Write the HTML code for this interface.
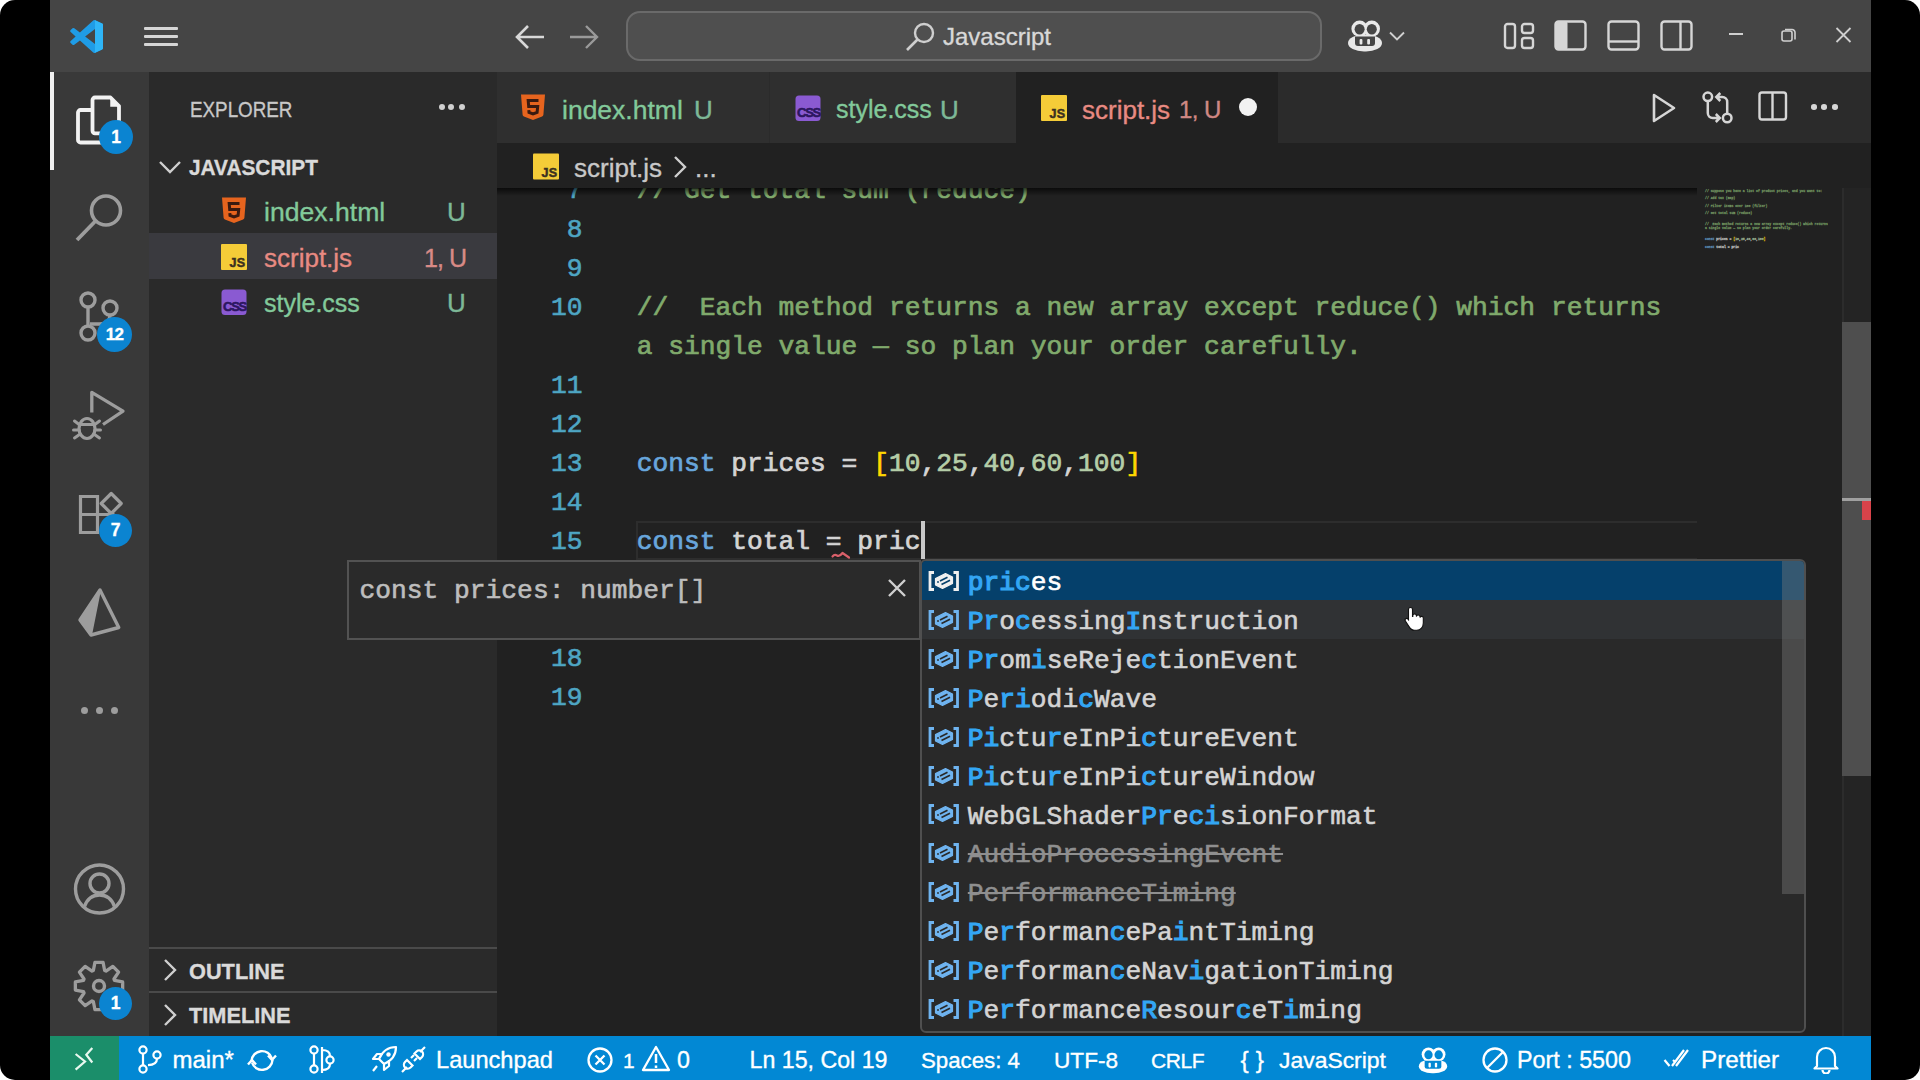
<!DOCTYPE html>
<html><head><meta charset="utf-8">
<style>
*{margin:0;padding:0;box-sizing:border-box}
html,body{width:1920px;height:1080px;overflow:hidden;background:#fff}
body{position:relative;font-family:"Liberation Sans",sans-serif;line-height:normal;-webkit-text-stroke:0.35px currentColor}
.a{position:absolute;white-space:nowrap}
.frame{left:0;top:0;width:1920px;height:1080px;background:#000;border-radius:15px}
.title{left:50px;top:0;width:1821px;height:72px;background:#454545}
.act{left:50px;top:72px;width:99px;height:964px;background:#393939}
.side{left:149px;top:72px;width:348px;height:964px;background:#2a2a2a}
.tabs{left:497px;top:72px;width:1374px;height:71px;background:#2b2b2b}
.editor{left:497px;top:143px;width:1374px;height:893px;background:#212121}
.bc{left:497px;top:143px;width:1374px;height:45px;background:#222222}
.status{left:50px;top:1036px;width:1821px;height:44px;background:#0288d4}
.remote{left:50px;top:1036px;width:69px;height:44px;background:#1b8e6a}
.mono{font-family:"Liberation Mono",monospace}
.ln{width:85.5px;text-align:right;font-size:26.28px;color:#4ea6c4;-webkit-text-stroke:0.6px #4ea6c4}
.code{font-size:26.28px;white-space:pre;-webkit-text-stroke:0.7px currentColor}
.code span{-webkit-text-stroke:0.7px currentColor}
</style></head><body>
<div class="a frame"></div>
<div class="a title"></div>
<div class="a act"></div>
<div class="a side"></div>
<div class="a tabs"></div>
<div class="a editor"></div>
<div class="a status"></div>
<div class="a remote"></div>
<!-- TITLE BAR -->
<svg class="a" style="left:69.8px;top:20px" width="33.5" height="33" viewBox="0 0 100 100"><path fill="#1f9ce6" d="M96.46 10.8L75.86.87a6.23 6.230 0 0 0-7.1 1.21L29.35 38.04 12.19 25.01a4.16 4.16 0 0 0-5.32.24l-5.5 5a4.17 4.17 0 0 0 0 6.16L16.26 50 1.37 63.58a4.17 4.17 0 0 0 0 6.160l5.5 5a4.16 4.16 0 0 0 5.32.24l17.16-13.03 39.41 35.96a6.22 6.22 0 0 0 7.1 1.2l20.6-9.92a6.25 6.25 0 0 0 3.54-5.63V16.43a6.25 6.25 0 0 0-3.54-5.63zM75 72.7L45.1 50 75 27.3z"/><path fill="#2fb5f7" d="M75 0.5 L96.46 10.8 a6.25 6.25 0 0 1 3.54 5.63 V83.57 a6.25 6.25 0 0 1-3.54 5.63 L75 99.5z"/></svg>
<div class="a" style="left:144px;top:27px;width:34px;height:3px;background:#d6d6d6;border-radius:1px"></div>
<div class="a" style="left:144px;top:35px;width:34px;height:3px;background:#d6d6d6;border-radius:1px"></div>
<div class="a" style="left:144px;top:43px;width:34px;height:3px;background:#d6d6d6;border-radius:1px"></div>
<svg class="a" style="left:514px;top:24px" width="32" height="26" viewBox="0 0 32 26"><path d="M30 13H4M14 2L3 13l11 11" fill="none" stroke="#d8d8d8" stroke-width="2.6"/></svg>
<svg class="a" style="left:568px;top:24px" width="32" height="26" viewBox="0 0 32 26"><path d="M2 13h26M18 2l11 11-11 11" fill="none" stroke="#9a9a9a" stroke-width="2.4"/></svg>
<div class="a" style="left:626px;top:11px;width:696px;height:50px;background:#4f4f4f;border:2px solid #6a6a6a;border-radius:14px"></div>
<svg class="a" style="left:905px;top:21px" width="32" height="32" viewBox="0 0 32 32"><circle cx="19" cy="12" r="9" fill="none" stroke="#cfcfcf" stroke-width="2.4"/><path d="M12.5 18.5L2 29" stroke="#cfcfcf" stroke-width="2.6"/></svg>
<div class="a" style="left:943px;top:21px;font-size:24px;color:#d8d8d8;line-height:32px">Javascript</div>
<svg class="a" style="left:1347px;top:19.5px" width="36" height="32" viewBox="0 0 36 32"><rect x="1" y="14.5" width="34" height="17" rx="16" ry="8.5" fill="#e8e8e8"/><circle cx="12.6" cy="8.8" r="8.2" fill="#e8e8e8"/><circle cx="24.8" cy="8.8" r="8.2" fill="#e8e8e8"/><ellipse cx="12.6" cy="9.3" rx="5" ry="5.3" fill="#454545"/><ellipse cx="24.8" cy="9.3" rx="5" ry="5.3" fill="#454545"/><path d="M8 16.5h20v6.5a3 3 0 0 1-3 3H11a3 3 0 0 1-3-3z" fill="#454545"/><rect x="12.6" y="19" width="2.8" height="5.5" rx="1" fill="#e8e8e8"/><rect x="20.2" y="19" width="2.8" height="5.5" rx="1" fill="#e8e8e8"/></svg>
<svg class="a" style="left:1388px;top:30px" width="18" height="12" viewBox="0 0 18 12"><path d="M2 2.5l7 7 7-7" fill="none" stroke="#d0d0d0" stroke-width="1.9"/></svg>
<svg class="a" style="left:1503px;top:22px" width="32" height="28" viewBox="0 0 32 28"><rect x="2" y="2" width="10" height="24" rx="2.5" fill="none" stroke="#d6d6d6" stroke-width="2.4"/><rect x="19" y="2" width="11" height="9" rx="2.5" fill="none" stroke="#d6d6d6" stroke-width="2.4"/><rect x="19" y="16" width="11" height="10" rx="2.5" fill="none" stroke="#d6d6d6" stroke-width="2.4"/></svg>
<svg class="a" style="left:1554px;top:20px" width="34" height="32" viewBox="0 0 34 32"><rect x="1.5" y="1.5" width="30" height="28" rx="3" fill="none" stroke="#d6d6d6" stroke-width="2.4"/><rect x="1.5" y="1.5" width="12" height="28" rx="2" fill="#d6d6d6"/></svg>
<svg class="a" style="left:1607px;top:20px" width="34" height="32" viewBox="0 0 34 32"><rect x="1.5" y="1.5" width="30" height="28" rx="3" fill="none" stroke="#d6d6d6" stroke-width="2.4"/><path d="M2 21.5h30" stroke="#d6d6d6" stroke-width="2.4"/></svg>
<svg class="a" style="left:1660px;top:20px" width="34" height="32" viewBox="0 0 34 32"><rect x="1.5" y="1.5" width="30" height="28" rx="3" fill="none" stroke="#d6d6d6" stroke-width="2.4"/><path d="M20.5 2v28" stroke="#d6d6d6" stroke-width="2.4"/></svg>
<div class="a" style="left:1729px;top:33px;width:14px;height:2px;background:#cfcfcf"></div>
<svg class="a" style="left:1781px;top:27px" width="16" height="16" viewBox="0 0 16 16"><rect x="1" y="4" width="10" height="10" rx="2" fill="none" stroke="#cfcfcf" stroke-width="1.6"/><path d="M4 2.5h7a3 3 0 0 1 3 3v7" fill="none" stroke="#cfcfcf" stroke-width="1.6"/></svg>
<svg class="a" style="left:1835px;top:27px" width="17" height="16" viewBox="0 0 17 16"><path d="M1.5 1l14 14M15.5 1l-14 14" stroke="#cfcfcf" stroke-width="1.8"/></svg>

<!-- ACTIVITY BAR -->
<div class="a" style="left:50px;top:72px;width:4px;height:98px;background:#f0f0f0"></div>
<svg class="a" style="left:74px;top:92px" width="50" height="56" viewBox="0 0 50 56"><path d="M17 18H6.5A2.5 2.5 0 0 0 4 20.5v27.5A2.5 2.5 0 0 0 6.5 50.5h22a2.5 2.5 0 0 0 2.5-2.5V44" fill="none" stroke="#f2f2f2" stroke-width="3.8"/><path d="M18.5 8A2.5 2.5 0 0 1 21 5.5h15.5l8.5 8.5v24.8a2.5 2.5 0 0 1-2.5 2.5H21a2.5 2.5 0 0 1-2.5-2.5z" fill="none" stroke="#f2f2f2" stroke-width="3.8" stroke-linejoin="round"/><path d="M37 7v7h7z" fill="#f2f2f2" stroke="#f2f2f2" stroke-width="1.5"/></svg>
<div class="a" style="left:99px;top:120px;width:34px;height:34px;border-radius:50%;background:#0b84d1;color:#fff;font-weight:bold;font-size:17.5px;text-align:center;line-height:34px">1</div>
<svg class="a" style="left:72px;top:188px" width="54" height="58" viewBox="0 0 54 58"><circle cx="34" cy="22.5" r="14.5" fill="none" stroke="#9d9d9d" stroke-width="3.6"/><path d="M23.5 33L5 52" stroke="#9d9d9d" stroke-width="3.8"/></svg>
<svg class="a" style="left:72px;top:285px" width="52" height="60" viewBox="0 0 52 60"><circle cx="16" cy="15" r="7" fill="none" stroke="#9d9d9d" stroke-width="3.4"/><circle cx="38" cy="23" r="7" fill="none" stroke="#9d9d9d" stroke-width="3.4"/><circle cx="16" cy="48" r="7" fill="none" stroke="#9d9d9d" stroke-width="3.4"/><path d="M16 22v19M38 30c0 6-4 9-10 9H18" fill="none" stroke="#9d9d9d" stroke-width="3.4"/></svg>
<div class="a" style="left:97px;top:317px;width:35px;height:35px;border-radius:50%;background:#0b84d1;color:#fff;font-weight:bold;font-size:17px;text-align:center;line-height:35px;letter-spacing:-0.6px">12</div>
<svg class="a" style="left:70px;top:386px" width="60" height="58" viewBox="0 0 60 58"><path d="M21.8 26.5V6.3L53 25.2 33 38.5" fill="none" stroke="#9d9d9d" stroke-width="3.3" stroke-linejoin="round"/><ellipse cx="17" cy="42.5" rx="8" ry="10" fill="none" stroke="#9d9d9d" stroke-width="3.2"/><path d="M9 38.5h16M4.5 35l4 3M3.5 44h5.5M4.5 52l5-3.5M29.5 35l-4 3M30.5 44h-5.5M29.5 52l-5-3.5" stroke="#9d9d9d" stroke-width="3" stroke-linecap="round"/></svg>
<svg class="a" style="left:74px;top:488px" width="52" height="52" viewBox="0 0 52 52"><path d="M6.5 8.5h17v18h-17zM6.5 26.5h17v18h-17zM23.5 26.5h17" fill="none" stroke="#9d9d9d" stroke-width="3.2"/><path d="M37.2 5.5l10 10-10 10-10-10z" fill="none" stroke="#9d9d9d" stroke-width="3.2" stroke-linejoin="round"/></svg>
<div class="a" style="left:99px;top:514px;width:33px;height:33px;border-radius:50%;background:#0b84d1;color:#fff;font-weight:bold;font-size:17.5px;text-align:center;line-height:33px">7</div>
<svg class="a" style="left:76px;top:586px" width="46" height="54" viewBox="0 0 46 54"><path d="M24 4L42.75 41.5 15 49 4 34z" fill="none" stroke="#9d9d9d" stroke-width="3.4" stroke-linejoin="round"/><path d="M24 4L4 34l11 15z" fill="#9d9d9d" stroke="#9d9d9d" stroke-width="2" stroke-linejoin="round"/></svg>
<div class="a" style="left:80.5px;top:706.5px;width:7px;height:7px;border-radius:50%;background:#9d9d9d"></div>
<div class="a" style="left:95.7px;top:706.5px;width:7px;height:7px;border-radius:50%;background:#9d9d9d"></div>
<div class="a" style="left:111px;top:706.5px;width:7px;height:7px;border-radius:50%;background:#9d9d9d"></div>
<svg class="a" style="left:72px;top:862px" width="54" height="54" viewBox="0 0 54 54"><circle cx="27.5" cy="27" r="24" fill="none" stroke="#9d9d9d" stroke-width="3.4"/><circle cx="27.5" cy="21.5" r="9.5" fill="none" stroke="#9d9d9d" stroke-width="3.4"/><path d="M12.5 44.5c2.5-7 8-11.5 15-11.5s12.5 4.5 15 11.5" fill="none" stroke="#9d9d9d" stroke-width="3.4"/></svg>
<svg class="a" style="left:72px;top:959px" width="54" height="54" viewBox="0 0 54 54"><path d="M21.34 11.50 L22.94 3.35 L31.06 3.35 L32.66 11.50 L33.96 12.04 L40.85 7.40 L46.60 13.15 L41.96 20.04 L42.50 21.34 L50.65 22.94 L50.65 31.06 L42.50 32.66 L41.96 33.96 L46.60 40.85 L40.85 46.60 L33.96 41.96 L32.66 42.50 L31.06 50.65 L22.94 50.65 L21.34 42.50 L20.04 41.96 L13.15 46.60 L7.40 40.85 L12.04 33.96 L11.50 32.66 L3.35 31.06 L3.35 22.94 L11.50 21.34 L12.04 20.04 L7.40 13.15 L13.15 7.40 L20.04 12.04z" fill="none" stroke="#9d9d9d" stroke-width="3.3" stroke-linejoin="round"/><circle cx="27" cy="27" r="5.5" fill="none" stroke="#9d9d9d" stroke-width="3.4"/></svg>
<div class="a" style="left:99px;top:987px;width:33px;height:33px;border-radius:50%;background:#0b84d1;color:#fff;font-weight:bold;font-size:17.5px;text-align:center;line-height:33px">1</div>

<!-- SIDEBAR -->
<div class="a" style="left:190px;top:96.5px;font-size:22.4px;letter-spacing:0px;color:#c8c8c8;transform-origin:0 0;transform:scaleX(0.84)">EXPLORER</div>
<div class="a" style="left:438.7px;top:104px;width:6px;height:6px;border-radius:50%;background:#d0d0d0"></div>
<div class="a" style="left:448.4px;top:104px;width:6px;height:6px;border-radius:50%;background:#d0d0d0"></div>
<div class="a" style="left:459px;top:104px;width:6px;height:6px;border-radius:50%;background:#d0d0d0"></div>
<svg class="a" style="left:158px;top:158px" width="24" height="18" viewBox="0 0 24 18"><path d="M2 4l10 10L22 4" fill="none" stroke="#cfcfcf" stroke-width="2.4"/></svg>
<div class="a" style="left:189px;top:154.3px;font-size:22.9px;font-weight:bold;color:#dadada;letter-spacing:0px;transform-origin:0 0;transform:scaleX(0.91)">JAVASCRIPT</div>
<div class="a" style="left:149px;top:233px;width:348px;height:46px;background:#3a3a3f"></div>
<svg class="a h5" style="left:221px;top:197px" width="26" height="26" viewBox="0 0 26 26"><path d="M1 0.5h24l-1.6 20.3a2 2 0 0 1-1.3 1.7L13 26l-9.1-3.5a2 2 0 0 1-1.3-1.7z" fill="#e6641e"/><path d="M18.5 6.5H8.2l.5 6h9l-.6 5.8L13 19.8l-4-1.4-.2-2.2" fill="none" stroke="#3a1a10" stroke-width="3"/></svg>
<div class="a" style="left:264px;top:196.5px;font-size:26.6px;color:#82c99a">index.html</div>
<div class="a" style="left:447px;top:197px;font-size:26px;color:#7db897">U</div>
<svg class="a" style="left:221px;top:243.6px" width="26" height="26" viewBox="0 0 26 26"><rect x="0" y="0" width="26" height="26" rx="1" fill="#f5cc38"/><text x="24.5" y="23" text-anchor="end" font-family="Liberation Sans" font-weight="bold" font-size="12.5" fill="#3a3020" letter-spacing="0.3" stroke="#3a3020" stroke-width="0.5">JS</text></svg>
<div class="a" style="left:264px;top:242.5px;font-size:26px;color:#e88a82">script.js</div>
<div class="a" style="left:424px;top:243.5px;font-size:25px;letter-spacing:-0.9px;color:#d88a86">1, U</div>
<svg class="a" style="left:221px;top:289.3px" width="26" height="26" viewBox="0 0 26 26"><rect x="0.5" y="0.5" width="25" height="25.5" rx="3.5" fill="#8a5ad2"/><text x="13.5" y="21.5" text-anchor="middle" font-family="Liberation Sans" font-weight="bold" font-size="13" fill="#2c1660" letter-spacing="-1.3" stroke="#2c1660" stroke-width="0.6">CSS</text></svg>
<div class="a" style="left:264px;top:289px;font-size:25px;color:#82c99a">style.css</div>
<div class="a" style="left:447px;top:288px;font-size:26px;color:#7db897">U</div>
<div class="a" style="left:149px;top:947px;width:348px;height:2px;background:#4a4a4a"></div>
<svg class="a" style="left:160px;top:958px" width="20" height="24" viewBox="0 0 20 24"><path d="M5 2l10 10L5 22" fill="none" stroke="#cfcfcf" stroke-width="2.4"/></svg>
<div class="a" style="left:189px;top:957.6px;font-size:22.9px;font-weight:bold;color:#dadada;transform-origin:0 0;transform:scaleX(0.95)">OUTLINE</div>
<div class="a" style="left:149px;top:991px;width:348px;height:2px;background:#4a4a4a"></div>
<svg class="a" style="left:160px;top:1003px" width="20" height="24" viewBox="0 0 20 24"><path d="M5 2l10 10L5 22" fill="none" stroke="#cfcfcf" stroke-width="2.4"/></svg>
<div class="a" style="left:189px;top:1002.3px;font-size:22.9px;font-weight:bold;color:#dadada;transform-origin:0 0;transform:scaleX(0.95)">TIMELINE</div>

<!-- TABS -->
<div class="a" style="left:497px;top:72px;width:272px;height:71px;background:#2f2f2f"></div>
<div class="a" style="left:770px;top:72px;width:246px;height:71px;background:#2f2f2f"></div>
<div class="a" style="left:1016px;top:72px;width:262px;height:71px;background:#212121"></div>
<svg class="a" style="left:520px;top:93.5px" width="26" height="26" viewBox="0 0 26 26"><path d="M1 0.5h24l-1.6 20.3a2 2 0 0 1-1.3 1.7L13 26l-9.1-3.5a2 2 0 0 1-1.3-1.7z" fill="#e6641e"/><path d="M18.5 6.5H8.2l.5 6h9l-.6 5.8L13 19.8l-4-1.4-.2-2.2" fill="none" stroke="#3a1a10" stroke-width="3"/></svg>
<div class="a" style="left:562px;top:95px;font-size:26.5px;color:#82c99a">index.html</div>
<div class="a" style="left:694px;top:95px;font-size:26px;color:#7db897">U</div>
<svg class="a" style="left:795px;top:95px" width="26" height="26" viewBox="0 0 26 26"><rect x="0.5" y="0.5" width="25" height="25.5" rx="3.5" fill="#8a5ad2"/><text x="13.5" y="21.5" text-anchor="middle" font-family="Liberation Sans" font-weight="bold" font-size="13" fill="#2c1660" letter-spacing="-1.3" stroke="#2c1660" stroke-width="0.6">CSS</text></svg>
<div class="a" style="left:836px;top:95px;font-size:25px;color:#82c99a">style.css</div>
<div class="a" style="left:940px;top:95px;font-size:26px;color:#7db897">U</div>
<svg class="a" style="left:1041px;top:95px" width="26" height="26" viewBox="0 0 26 26"><rect x="0" y="0" width="26" height="26" rx="1" fill="#f5cc38"/><text x="24.5" y="23" text-anchor="end" font-family="Liberation Sans" font-weight="bold" font-size="12.5" fill="#3a3020" letter-spacing="0.3" stroke="#3a3020" stroke-width="0.5">JS</text></svg>
<div class="a" style="left:1082px;top:95px;font-size:26px;color:#e88a82">script.js</div>
<div class="a" style="left:1179px;top:96px;font-size:24px;letter-spacing:-0.6px;color:#d08884">1, U</div>
<div class="a" style="left:1239px;top:98px;width:18px;height:18px;border-radius:50%;background:#f2f2f2"></div>
<svg class="a" style="left:1650px;top:92px" width="28" height="32" viewBox="0 0 28 32"><path d="M4 3l20 13L4 29z" fill="none" stroke="#d6d6d6" stroke-width="2.6" stroke-linejoin="round"/></svg>
<svg class="a" style="left:1700px;top:88px" width="36" height="38" viewBox="0 0 36 38"><circle cx="7.8" cy="8.8" r="4.3" fill="none" stroke="#d6d6d6" stroke-width="2.5"/><circle cx="27.2" cy="30" r="4.3" fill="none" stroke="#d6d6d6" stroke-width="2.5"/><path d="M7.8 13.1V25a5 5 0 0 0 5 5h6.7M15.8 26l4 4-4 4M27.2 25.7V14a5 5 0 0 0-5-5H16.5M20.3 5l-4 4 4 4" fill="none" stroke="#d6d6d6" stroke-width="2.5"/></svg>
<svg class="a" style="left:1758px;top:91px" width="30" height="30" viewBox="0 0 30 30"><rect x="1.5" y="1.5" width="26.5" height="27" rx="2.5" fill="none" stroke="#d6d6d6" stroke-width="2.4"/><path d="M14.5 2v27" stroke="#d6d6d6" stroke-width="2.4"/></svg>
<div class="a" style="left:1811px;top:104px;width:5.6px;height:5.6px;border-radius:50%;background:#d6d6d6"></div>
<div class="a" style="left:1821.4px;top:104px;width:5.6px;height:5.6px;border-radius:50%;background:#d6d6d6"></div>
<div class="a" style="left:1832px;top:104px;width:5.6px;height:5.6px;border-radius:50%;background:#d6d6d6"></div>

<!-- BREADCRUMB -->
<svg class="a" style="left:533px;top:153px" width="26" height="27" viewBox="0 0 26 26"><rect x="0" y="0" width="26" height="26" rx="1" fill="#f5cc38"/><text x="24.5" y="23" text-anchor="end" font-family="Liberation Sans" font-weight="bold" font-size="12.5" fill="#3a3020" letter-spacing="0.3" stroke="#3a3020" stroke-width="0.5">JS</text></svg>
<div class="a" style="left:574px;top:152.5px;font-size:26px;color:#c8c8c8">script.js</div>
<svg class="a" style="left:671px;top:155px" width="18" height="24" viewBox="0 0 18 24"><path d="M4 2l10 10L4 22" fill="none" stroke="#cfcfcf" stroke-width="2.4"/></svg>
<div class="a" style="left:695px;top:152.5px;font-size:26px;color:#c8c8c8">...</div>

<!-- EDITOR -->
<div class="a" style="left:497px;top:188px;width:1345px;height:848px;overflow:hidden">
<div class="a" style="left:139px;top:333px;width:1061px;height:39px;border:2px solid #2d2d2d;border-right:none"></div>
<div class="a mono ln" style="left:0px;top:-12.389999999999986px">7</div>
<div class="a mono ln" style="left:0px;top:26.610000000000014px">8</div>
<div class="a mono ln" style="left:0px;top:65.61000000000001px">9</div>
<div class="a mono ln" style="left:0px;top:104.61000000000001px">10</div>
<div class="a mono ln" style="left:0px;top:182.61px">11</div>
<div class="a mono ln" style="left:0px;top:221.61px">12</div>
<div class="a mono ln" style="left:0px;top:260.61px">13</div>
<div class="a mono ln" style="left:0px;top:299.61px">14</div>
<div class="a mono ln" style="left:0px;top:338.61px">15</div>
<div class="a mono ln" style="left:0px;top:377.61px">16</div>
<div class="a mono ln" style="left:0px;top:416.61px">17</div>
<div class="a mono ln" style="left:0px;top:455.61px">18</div>
<div class="a mono ln" style="left:0px;top:494.61px">19</div>
<div class="a mono code" style="left:139.7px;top:-12.389999999999986px"><span style="color:#80aa6c">//&nbsp;Get&nbsp;total&nbsp;sum&nbsp;(reduce)</span></div>
<div class="a mono code" style="left:139.7px;top:104.61000000000001px"><span style="color:#80aa6c">//&nbsp;&nbsp;Each&nbsp;method&nbsp;returns&nbsp;a&nbsp;new&nbsp;array&nbsp;except&nbsp;reduce()&nbsp;which&nbsp;returns</span></div>
<div class="a mono code" style="left:139.7px;top:260.61px"><span style="color:#68a6dc">const</span><span style="color:#d4d4d4">&nbsp;prices&nbsp;=&nbsp;</span><span style="color:#ffd700">[</span><span style="color:#b5cea8">10</span><span style="color:#d4d4d4">,</span><span style="color:#b5cea8">25</span><span style="color:#d4d4d4">,</span><span style="color:#b5cea8">40</span><span style="color:#d4d4d4">,</span><span style="color:#b5cea8">60</span><span style="color:#d4d4d4">,</span><span style="color:#b5cea8">100</span><span style="color:#ffd700">]</span></div>
<div class="a mono code" style="left:139.7px;top:338.61px"><span style="color:#68a6dc">const</span><span style="color:#d4d4d4">&nbsp;total&nbsp;=&nbsp;pric</span></div>
<div class="a mono code" style="left:139.7px;top:143.61px;color:#80aa6c">a&nbsp;single&nbsp;value&nbsp;—&nbsp;so&nbsp;plan&nbsp;your&nbsp;order&nbsp;carefully.</div>
</div>
<div class="a" style="left:497px;top:188px;width:1200px;height:8px;background:linear-gradient(#000000aa,#00000000)"></div>
<div class="a" style="left:920.5px;top:521px;width:4px;height:38px;background:#c9c9c9"></div>
<svg class="a" style="left:830px;top:549px" width="22" height="12" viewBox="0 0 22 12"><path d="M2.5 7.5Q4.5 5 7 6.5T12.5 4L19 8.5" fill="none" stroke="#d9606a" stroke-width="2.2" stroke-linejoin="round" stroke-linecap="round"/></svg>
<!-- MINIMAP -->
<div class="a mono" style="left:1705px;top:188.8px;opacity:.8;transform-origin:0 0;transform:scale(0.0984);font-size:32px;line-height:38.1px;white-space:pre;-webkit-text-stroke:3px currentColor"><div style="height:38.1px"><span style="color:#80aa6c">// Suppose you have a list of product prices, and you want to:</span></div><div style="height:38.1px">&nbsp;</div><div style="height:38.1px"><span style="color:#80aa6c">// Add tax (map)</span></div><div style="height:38.1px">&nbsp;</div><div style="height:38.1px"><span style="color:#80aa6c">// Filter items over 100 (filter)</span></div><div style="height:38.1px">&nbsp;</div><div style="height:38.1px"><span style="color:#80aa6c">// Get total sum (reduce)</span></div><div style="height:38.1px">&nbsp;</div><div style="height:38.1px">&nbsp;</div><div style="height:38.1px"><span style="color:#80aa6c">//  Each method returns a new array except reduce() which returns</span></div><div style="height:38.1px"><span style="color:#80aa6c">a single value — so plan your order carefully.</span></div><div style="height:38.1px">&nbsp;</div><div style="height:38.1px">&nbsp;</div><div style="height:38.1px"><span style="color:#68a6dc">const</span><span style="color:#e0e0e0"> prices = </span><span style="color:#ffd700">[</span><span style="color:#b5cea8">10</span><span style="color:#e0e0e0">,</span><span style="color:#b5cea8">25</span><span style="color:#e0e0e0">,</span><span style="color:#b5cea8">40</span><span style="color:#e0e0e0">,</span><span style="color:#b5cea8">60</span><span style="color:#e0e0e0">,</span><span style="color:#b5cea8">100</span><span style="color:#ffd700">]</span></div><div style="height:38.1px">&nbsp;</div><div style="height:38.1px"><span style="color:#68a6dc">const</span><span style="color:#e0e0e0"> total = pric</span></div></div>
<!-- EDITOR SCROLLBAR -->
<div class="a" style="left:1842px;top:188px;width:29px;height:848px;background:#242424;border-left:2px solid #2c2c2c"></div>
<div class="a" style="left:1842px;top:322px;width:29px;height:454px;background:#4e4e4e"></div>
<div class="a" style="left:1842px;top:498px;width:29px;height:3px;background:#a0a0a0"></div>
<div class="a" style="left:1862px;top:501px;width:9px;height:19px;background:#d8434a"></div>
<!-- HOVER -->
<div class="a" style="left:347px;top:560px;width:574px;height:80px;background:#2a2a2a;border:2px solid #525252"></div>
<div class="a mono" style="left:359.5px;top:575.51px;font-size:26.28px;color:#bdbdbd;white-space:pre;-webkit-text-stroke:0.6px currentColor">const prices: number[]</div>
<svg class="a" style="left:887px;top:578px" width="20" height="20" viewBox="0 0 20 20"><path d="M2 2l16 16M18 2L2 18" stroke="#d0d0d0" stroke-width="2.4"/></svg>
<!-- SUGGEST -->
<div class="a" style="left:920px;top:559px;width:886px;height:474px;background:#292929;border:2px solid #4f4f4f;border-radius:6px;overflow:hidden">
<div class="a" style="left:0;top:0;width:882px;height:39px;background:#05406b"></div>
<div class="a" style="left:0;top:39px;width:882px;height:39px;background:#303234"></div>
<div class="a" style="left:860px;top:0;width:22px;height:333px;background:rgba(121,121,121,.42)"></div>
<svg class="a" style="left:5.5px;top:10.0px" width="32" height="20" viewBox="0 0 32 20"><path d="M6 1.5H2v17h4M25.5 1.5h4v17h-4" fill="none" stroke="#f0f0f0" stroke-width="2.8"/><path d="M7.5 7.5L17.5 2.5 24.5 6v6.5l-10 5-7-3.5z" fill="#f0f0f0" stroke="#f0f0f0" stroke-width="1.2" stroke-linejoin="round"/><path d="M12 10l7.5-3.8M13.5 13.5l8.5-4.2" stroke="#05406b" stroke-width="1.7"/><circle cx="10" cy="11" r="0.9" fill="#05406b"/></svg>
<div class="a mono" style="left:45.8px;top:7.11px;font-size:26.28px;color:#ffffff;white-space:pre;-webkit-text-stroke:0.6px currentColor"><span style="color:#33a6f4;-webkit-text-stroke:1.2px #33a6f4">pric</span><span>es</span></div>
<svg class="a" style="left:5.5px;top:48.9px" width="32" height="20" viewBox="0 0 32 20"><path d="M6 1.5H2v17h4M25.5 1.5h4v17h-4" fill="none" stroke="#6fb4f0" stroke-width="2.8"/><path d="M7.5 7.5L17.5 2.5 24.5 6v6.5l-10 5-7-3.5z" fill="#6fb4f0" stroke="#6fb4f0" stroke-width="1.2" stroke-linejoin="round"/><path d="M12 10l7.5-3.8M13.5 13.5l8.5-4.2" stroke="#292929" stroke-width="1.7"/><circle cx="10" cy="11" r="0.9" fill="#292929"/></svg>
<div class="a mono" style="left:45.8px;top:46.01px;font-size:26.28px;color:#d4d4d4;white-space:pre;-webkit-text-stroke:0.6px currentColor"><span style="color:#33a6f4;-webkit-text-stroke:1.2px #33a6f4">Pr</span><span>o</span><span style="color:#33a6f4;-webkit-text-stroke:1.2px #33a6f4">c</span><span>essing</span><span style="color:#33a6f4;-webkit-text-stroke:1.2px #33a6f4">I</span><span>nstruction</span></div>
<svg class="a" style="left:5.5px;top:87.8px" width="32" height="20" viewBox="0 0 32 20"><path d="M6 1.5H2v17h4M25.5 1.5h4v17h-4" fill="none" stroke="#6fb4f0" stroke-width="2.8"/><path d="M7.5 7.5L17.5 2.5 24.5 6v6.5l-10 5-7-3.5z" fill="#6fb4f0" stroke="#6fb4f0" stroke-width="1.2" stroke-linejoin="round"/><path d="M12 10l7.5-3.8M13.5 13.5l8.5-4.2" stroke="#292929" stroke-width="1.7"/><circle cx="10" cy="11" r="0.9" fill="#292929"/></svg>
<div class="a mono" style="left:45.8px;top:84.91px;font-size:26.28px;color:#d4d4d4;white-space:pre;-webkit-text-stroke:0.6px currentColor"><span style="color:#33a6f4;-webkit-text-stroke:1.2px #33a6f4">Pr</span><span>om</span><span style="color:#33a6f4;-webkit-text-stroke:1.2px #33a6f4">i</span><span>seReje</span><span style="color:#33a6f4;-webkit-text-stroke:1.2px #33a6f4">c</span><span>tionEvent</span></div>
<svg class="a" style="left:5.5px;top:126.7px" width="32" height="20" viewBox="0 0 32 20"><path d="M6 1.5H2v17h4M25.5 1.5h4v17h-4" fill="none" stroke="#6fb4f0" stroke-width="2.8"/><path d="M7.5 7.5L17.5 2.5 24.5 6v6.5l-10 5-7-3.5z" fill="#6fb4f0" stroke="#6fb4f0" stroke-width="1.2" stroke-linejoin="round"/><path d="M12 10l7.5-3.8M13.5 13.5l8.5-4.2" stroke="#292929" stroke-width="1.7"/><circle cx="10" cy="11" r="0.9" fill="#292929"/></svg>
<div class="a mono" style="left:45.8px;top:123.81px;font-size:26.28px;color:#d4d4d4;white-space:pre;-webkit-text-stroke:0.6px currentColor"><span style="color:#33a6f4;-webkit-text-stroke:1.2px #33a6f4">P</span><span>e</span><span style="color:#33a6f4;-webkit-text-stroke:1.2px #33a6f4">ri</span><span>odi</span><span style="color:#33a6f4;-webkit-text-stroke:1.2px #33a6f4">c</span><span>Wave</span></div>
<svg class="a" style="left:5.5px;top:165.6px" width="32" height="20" viewBox="0 0 32 20"><path d="M6 1.5H2v17h4M25.5 1.5h4v17h-4" fill="none" stroke="#6fb4f0" stroke-width="2.8"/><path d="M7.5 7.5L17.5 2.5 24.5 6v6.5l-10 5-7-3.5z" fill="#6fb4f0" stroke="#6fb4f0" stroke-width="1.2" stroke-linejoin="round"/><path d="M12 10l7.5-3.8M13.5 13.5l8.5-4.2" stroke="#292929" stroke-width="1.7"/><circle cx="10" cy="11" r="0.9" fill="#292929"/></svg>
<div class="a mono" style="left:45.8px;top:162.71px;font-size:26.28px;color:#d4d4d4;white-space:pre;-webkit-text-stroke:0.6px currentColor"><span style="color:#33a6f4;-webkit-text-stroke:1.2px #33a6f4">Pi</span><span>ctu</span><span style="color:#33a6f4;-webkit-text-stroke:1.2px #33a6f4">r</span><span>eInPi</span><span style="color:#33a6f4;-webkit-text-stroke:1.2px #33a6f4">c</span><span>tureEvent</span></div>
<svg class="a" style="left:5.5px;top:204.5px" width="32" height="20" viewBox="0 0 32 20"><path d="M6 1.5H2v17h4M25.5 1.5h4v17h-4" fill="none" stroke="#6fb4f0" stroke-width="2.8"/><path d="M7.5 7.5L17.5 2.5 24.5 6v6.5l-10 5-7-3.5z" fill="#6fb4f0" stroke="#6fb4f0" stroke-width="1.2" stroke-linejoin="round"/><path d="M12 10l7.5-3.8M13.5 13.5l8.5-4.2" stroke="#292929" stroke-width="1.7"/><circle cx="10" cy="11" r="0.9" fill="#292929"/></svg>
<div class="a mono" style="left:45.8px;top:201.61px;font-size:26.28px;color:#d4d4d4;white-space:pre;-webkit-text-stroke:0.6px currentColor"><span style="color:#33a6f4;-webkit-text-stroke:1.2px #33a6f4">Pi</span><span>ctu</span><span style="color:#33a6f4;-webkit-text-stroke:1.2px #33a6f4">r</span><span>eInPi</span><span style="color:#33a6f4;-webkit-text-stroke:1.2px #33a6f4">c</span><span>tureWindow</span></div>
<svg class="a" style="left:5.5px;top:243.4px" width="32" height="20" viewBox="0 0 32 20"><path d="M6 1.5H2v17h4M25.5 1.5h4v17h-4" fill="none" stroke="#6fb4f0" stroke-width="2.8"/><path d="M7.5 7.5L17.5 2.5 24.5 6v6.5l-10 5-7-3.5z" fill="#6fb4f0" stroke="#6fb4f0" stroke-width="1.2" stroke-linejoin="round"/><path d="M12 10l7.5-3.8M13.5 13.5l8.5-4.2" stroke="#292929" stroke-width="1.7"/><circle cx="10" cy="11" r="0.9" fill="#292929"/></svg>
<div class="a mono" style="left:45.8px;top:240.51px;font-size:26.28px;color:#d4d4d4;white-space:pre;-webkit-text-stroke:0.6px currentColor"><span>WebGLShader</span><span style="color:#33a6f4;-webkit-text-stroke:1.2px #33a6f4">Pr</span><span>e</span><span style="color:#33a6f4;-webkit-text-stroke:1.2px #33a6f4">ci</span><span>sionFormat</span></div>
<svg class="a" style="left:5.5px;top:282.3px" width="32" height="20" viewBox="0 0 32 20"><path d="M6 1.5H2v17h4M25.5 1.5h4v17h-4" fill="none" stroke="#6fb4f0" stroke-width="2.8"/><path d="M7.5 7.5L17.5 2.5 24.5 6v6.5l-10 5-7-3.5z" fill="#6fb4f0" stroke="#6fb4f0" stroke-width="1.2" stroke-linejoin="round"/><path d="M12 10l7.5-3.8M13.5 13.5l8.5-4.2" stroke="#292929" stroke-width="1.7"/><circle cx="10" cy="11" r="0.9" fill="#292929"/></svg>
<div class="a mono" style="left:45.8px;top:279.41px;font-size:26.28px;color:#d4d4d4;white-space:pre;-webkit-text-stroke:0.6px currentColor"><span style="color:#8f8f8f;text-decoration:line-through">AudioProcessingEvent</span></div>
<svg class="a" style="left:5.5px;top:321.2px" width="32" height="20" viewBox="0 0 32 20"><path d="M6 1.5H2v17h4M25.5 1.5h4v17h-4" fill="none" stroke="#6fb4f0" stroke-width="2.8"/><path d="M7.5 7.5L17.5 2.5 24.5 6v6.5l-10 5-7-3.5z" fill="#6fb4f0" stroke="#6fb4f0" stroke-width="1.2" stroke-linejoin="round"/><path d="M12 10l7.5-3.8M13.5 13.5l8.5-4.2" stroke="#292929" stroke-width="1.7"/><circle cx="10" cy="11" r="0.9" fill="#292929"/></svg>
<div class="a mono" style="left:45.8px;top:318.31px;font-size:26.28px;color:#d4d4d4;white-space:pre;-webkit-text-stroke:0.6px currentColor"><span style="color:#8f8f8f;text-decoration:line-through">PerformanceTiming</span></div>
<svg class="a" style="left:5.5px;top:360.1px" width="32" height="20" viewBox="0 0 32 20"><path d="M6 1.5H2v17h4M25.5 1.5h4v17h-4" fill="none" stroke="#6fb4f0" stroke-width="2.8"/><path d="M7.5 7.5L17.5 2.5 24.5 6v6.5l-10 5-7-3.5z" fill="#6fb4f0" stroke="#6fb4f0" stroke-width="1.2" stroke-linejoin="round"/><path d="M12 10l7.5-3.8M13.5 13.5l8.5-4.2" stroke="#292929" stroke-width="1.7"/><circle cx="10" cy="11" r="0.9" fill="#292929"/></svg>
<div class="a mono" style="left:45.8px;top:357.21px;font-size:26.28px;color:#d4d4d4;white-space:pre;-webkit-text-stroke:0.6px currentColor"><span style="color:#33a6f4;-webkit-text-stroke:1.2px #33a6f4">P</span><span>e</span><span style="color:#33a6f4;-webkit-text-stroke:1.2px #33a6f4">r</span><span>forman</span><span style="color:#33a6f4;-webkit-text-stroke:1.2px #33a6f4">c</span><span>ePa</span><span style="color:#33a6f4;-webkit-text-stroke:1.2px #33a6f4">i</span><span>ntTiming</span></div>
<svg class="a" style="left:5.5px;top:399.0px" width="32" height="20" viewBox="0 0 32 20"><path d="M6 1.5H2v17h4M25.5 1.5h4v17h-4" fill="none" stroke="#6fb4f0" stroke-width="2.8"/><path d="M7.5 7.5L17.5 2.5 24.5 6v6.5l-10 5-7-3.5z" fill="#6fb4f0" stroke="#6fb4f0" stroke-width="1.2" stroke-linejoin="round"/><path d="M12 10l7.5-3.8M13.5 13.5l8.5-4.2" stroke="#292929" stroke-width="1.7"/><circle cx="10" cy="11" r="0.9" fill="#292929"/></svg>
<div class="a mono" style="left:45.8px;top:396.11px;font-size:26.28px;color:#d4d4d4;white-space:pre;-webkit-text-stroke:0.6px currentColor"><span style="color:#33a6f4;-webkit-text-stroke:1.2px #33a6f4">P</span><span>e</span><span style="color:#33a6f4;-webkit-text-stroke:1.2px #33a6f4">r</span><span>forman</span><span style="color:#33a6f4;-webkit-text-stroke:1.2px #33a6f4">c</span><span>eNav</span><span style="color:#33a6f4;-webkit-text-stroke:1.2px #33a6f4">i</span><span>gationTiming</span></div>
<svg class="a" style="left:5.5px;top:437.9px" width="32" height="20" viewBox="0 0 32 20"><path d="M6 1.5H2v17h4M25.5 1.5h4v17h-4" fill="none" stroke="#6fb4f0" stroke-width="2.8"/><path d="M7.5 7.5L17.5 2.5 24.5 6v6.5l-10 5-7-3.5z" fill="#6fb4f0" stroke="#6fb4f0" stroke-width="1.2" stroke-linejoin="round"/><path d="M12 10l7.5-3.8M13.5 13.5l8.5-4.2" stroke="#292929" stroke-width="1.7"/><circle cx="10" cy="11" r="0.9" fill="#292929"/></svg>
<div class="a mono" style="left:45.8px;top:435.01px;font-size:26.28px;color:#d4d4d4;white-space:pre;-webkit-text-stroke:0.6px currentColor"><span style="color:#33a6f4;-webkit-text-stroke:1.2px #33a6f4">P</span><span>e</span><span style="color:#33a6f4;-webkit-text-stroke:1.2px #33a6f4">r</span><span>formance</span><span style="color:#33a6f4;-webkit-text-stroke:1.2px #33a6f4">R</span><span>esour</span><span style="color:#33a6f4;-webkit-text-stroke:1.2px #33a6f4">c</span><span>eT</span><span style="color:#33a6f4;-webkit-text-stroke:1.2px #33a6f4">i</span><span>ming</span></div>
</div>
<svg class="a" style="left:1404px;top:606px" width="22" height="26" viewBox="0 0 22 26"><path d="M6.5 1.5a2 2 0 0 1 2 2V10.5h.3V9.8a1.8 1.8 0 0 1 3.6 0v.8a1.8 1.8 0 0 1 3.6.3v.6a1.7 1.7 0 0 1 3.3.5V17c0 4-2.6 7.2-6.5 7.2h-2.2c-2.6 0-4.2-1.3-5.6-3.6L1.4 15a1.6 1.6 0 0 1 2.6-1.9l.5.6V3.5a2 2 0 0 1 2-2z" fill="#fff" stroke="#111" stroke-width="1.1"/></svg>
<!-- STATUS BAR -->
<svg class="a" style="left:72px;top:1045px" width="24" height="28" viewBox="0 0 24 28"><path d="M3.6 9l9.4 7.5-9.4 8.2M20.3 3l-6 6.8 6 7.7" fill="none" stroke="#e8f8ef" stroke-width="2.2"/></svg>
<svg class="a" style="left:138px;top:1045px" width="25" height="29" viewBox="0 0 25 29"><circle cx="5" cy="5" r="3.6" fill="none" stroke="#fff" stroke-width="2.2"/><circle cx="5" cy="24" r="3.6" fill="none" stroke="#fff" stroke-width="2.2"/><circle cx="19" cy="10" r="3.6" fill="none" stroke="#fff" stroke-width="2.2"/><path d="M5 8.6v11.8M19 13.6c0 5-4 6.5-9 6.5" fill="none" stroke="#fff" stroke-width="2.2"/></svg>
<div class="a" style="left:172.5px;top:1046.3px;font-size:24.02px;letter-spacing:0.00px;color:#ffffff;white-space:pre">main*</div>
<svg class="a" style="left:247px;top:1046px" width="30" height="28" viewBox="0 0 30 28"><path d="M4.5 15A10.5 10.5 0 0 1 25 12.5M25.5 14A10.5 10.5 0 0 1 5 16.5" fill="none" stroke="#fff" stroke-width="2.4"/><path d="M21 9.5l4 4.5 4-4.5M1 18.5l4-4.5 4 4.5" fill="none" stroke="#fff" stroke-width="2.4"/></svg>
<svg class="a" style="left:309px;top:1045px" width="27" height="29" viewBox="0 0 27 29"><circle cx="5" cy="5" r="3.6" fill="none" stroke="#fff" stroke-width="2.2"/><circle cx="5" cy="24" r="3.6" fill="none" stroke="#fff" stroke-width="2.2"/><circle cx="21" cy="15" r="3.6" fill="none" stroke="#fff" stroke-width="2.2"/><path d="M5 8.6v11.8M13 2v26M21 11c0-4-3-6-8-6M21 19c0 4-3 6-8 6" fill="none" stroke="#fff" stroke-width="2.2"/></svg>
<svg class="a" style="left:370px;top:1045px" width="28" height="29" viewBox="0 0 28 29"><path d="M26 2c-8 0-14 5-17 12l5 5c7-3 12-9 12-17zM9 14H3l4-5h6M14 19v6l5-4v-6M7 21l-4 5" fill="none" stroke="#fff" stroke-width="2.2" stroke-linejoin="round"/><circle cx="18.5" cy="9.5" r="2.2" fill="#fff"/></svg>
<svg class="a" style="left:400px;top:1045px" width="27" height="29" viewBox="0 0 27 29"><path d="M2 27l5-5M25 2l-5 5M7 15l-2 2a4 4 0 0 0 0 5.5 4 4 0 0 0 5.5 0l2-2zM20 14l2-2a4 4 0 0 0 0-5.5 4 4 0 0 0-5.5 0l-2 2zM11 13l3-3M14 16l3-3" fill="none" stroke="#fff" stroke-width="2.2"/></svg>
<div class="a" style="left:436.0px;top:1046.6px;font-size:23.64px;letter-spacing:0.00px;color:#ffffff;white-space:pre">Launchpad</div>
<svg class="a" style="left:585px;top:1046px" width="30" height="30" viewBox="0 0 30 30"><circle cx="15" cy="14" r="11.5" fill="none" stroke="#fff" stroke-width="2.3"/><path d="M10.5 9.5l9 9M19.5 9.5l-9 9" stroke="#fff" stroke-width="2.3"/></svg>
<div class="a" style="left:623.0px;top:1049.0px;font-size:21.00px;letter-spacing:-1.76px;color:#ffffff;white-space:pre">1</div>
<svg class="a" style="left:641px;top:1045px" width="30" height="28" viewBox="0 0 30 28"><path d="M15 2L2 25h26z" fill="none" stroke="#fff" stroke-width="2.3" stroke-linejoin="round"/><path d="M15 9v9M15 20.5v2.5" stroke="#fff" stroke-width="2.5"/></svg>
<div class="a" style="left:677.0px;top:1047.0px;font-size:23.21px;letter-spacing:0.00px;color:#ffffff;white-space:pre">0</div>
<div class="a" style="left:749.5px;top:1047.0px;font-size:23.19px;letter-spacing:0.00px;color:#ffffff;white-space:pre">Ln 15, Col 19</div>
<div class="a" style="left:921.0px;top:1047.9px;font-size:22.25px;letter-spacing:0.00px;color:#ffffff;white-space:pre">Spaces: 4</div>
<div class="a" style="left:1054.0px;top:1047.5px;font-size:22.61px;letter-spacing:0.00px;color:#ffffff;white-space:pre">UTF-8</div>
<div class="a" style="left:1151.0px;top:1049.0px;font-size:21.00px;letter-spacing:-0.44px;color:#ffffff;white-space:pre">CRLF</div>
<div class="a" style="left:1240.5px;top:1045.8px;font-size:24.50px;letter-spacing:0.11px;color:#ffffff;white-space:pre">{ }</div>
<div class="a" style="left:1279.0px;top:1047.3px;font-size:22.91px;letter-spacing:0.00px;color:#ffffff;white-space:pre">JavaScript</div>
<svg class="a" style="left:1418px;top:1047px" width="30" height="26.7" viewBox="0 0 36 32"><rect x="1" y="14.5" width="34" height="17" rx="16" ry="8.5" fill="#ffffff"/><circle cx="12.6" cy="8.8" r="8.2" fill="#ffffff"/><circle cx="24.8" cy="8.8" r="8.2" fill="#ffffff"/><ellipse cx="12.6" cy="9.3" rx="5" ry="5.3" fill="#0288d4"/><ellipse cx="24.8" cy="9.3" rx="5" ry="5.3" fill="#0288d4"/><path d="M8 16.5h20v6.5a3 3 0 0 1-3 3H11a3 3 0 0 1-3-3z" fill="#0288d4"/><rect x="12.6" y="19" width="2.8" height="5.5" rx="1" fill="#ffffff"/><rect x="20.2" y="19" width="2.8" height="5.5" rx="1" fill="#ffffff"/></svg>
<svg class="a" style="left:1481px;top:1046px" width="28" height="28" viewBox="0 0 28 28"><circle cx="14" cy="14" r="11.5" fill="none" stroke="#fff" stroke-width="2.3"/><path d="M6 22L22 6" stroke="#fff" stroke-width="2.3"/></svg>
<div class="a" style="left:1517.0px;top:1046.9px;font-size:23.31px;letter-spacing:0.00px;color:#ffffff;white-space:pre">Port : 5500</div>
<svg class="a" style="left:1663px;top:1047px" width="30" height="24" viewBox="0 0 30 24"><path d="M1.5 13l5 6M9 19L21 3M13 19L25 3M10 13l2 2" fill="none" stroke="#fff" stroke-width="2.2"/></svg>
<div class="a" style="left:1701.0px;top:1046.1px;font-size:24.22px;letter-spacing:0.00px;color:#ffffff;white-space:pre">Prettier</div>
<svg class="a" style="left:1813px;top:1045px" width="26" height="29" viewBox="0 0 26 29"><path d="M4 21V12a9 9 0 0 1 18 0v9l2.5 2.5H1.5zM9.5 25a3.5 3.5 0 0 0 7 0" fill="none" stroke="#fff" stroke-width="2.2" stroke-linejoin="round"/></svg>
</body></html>
